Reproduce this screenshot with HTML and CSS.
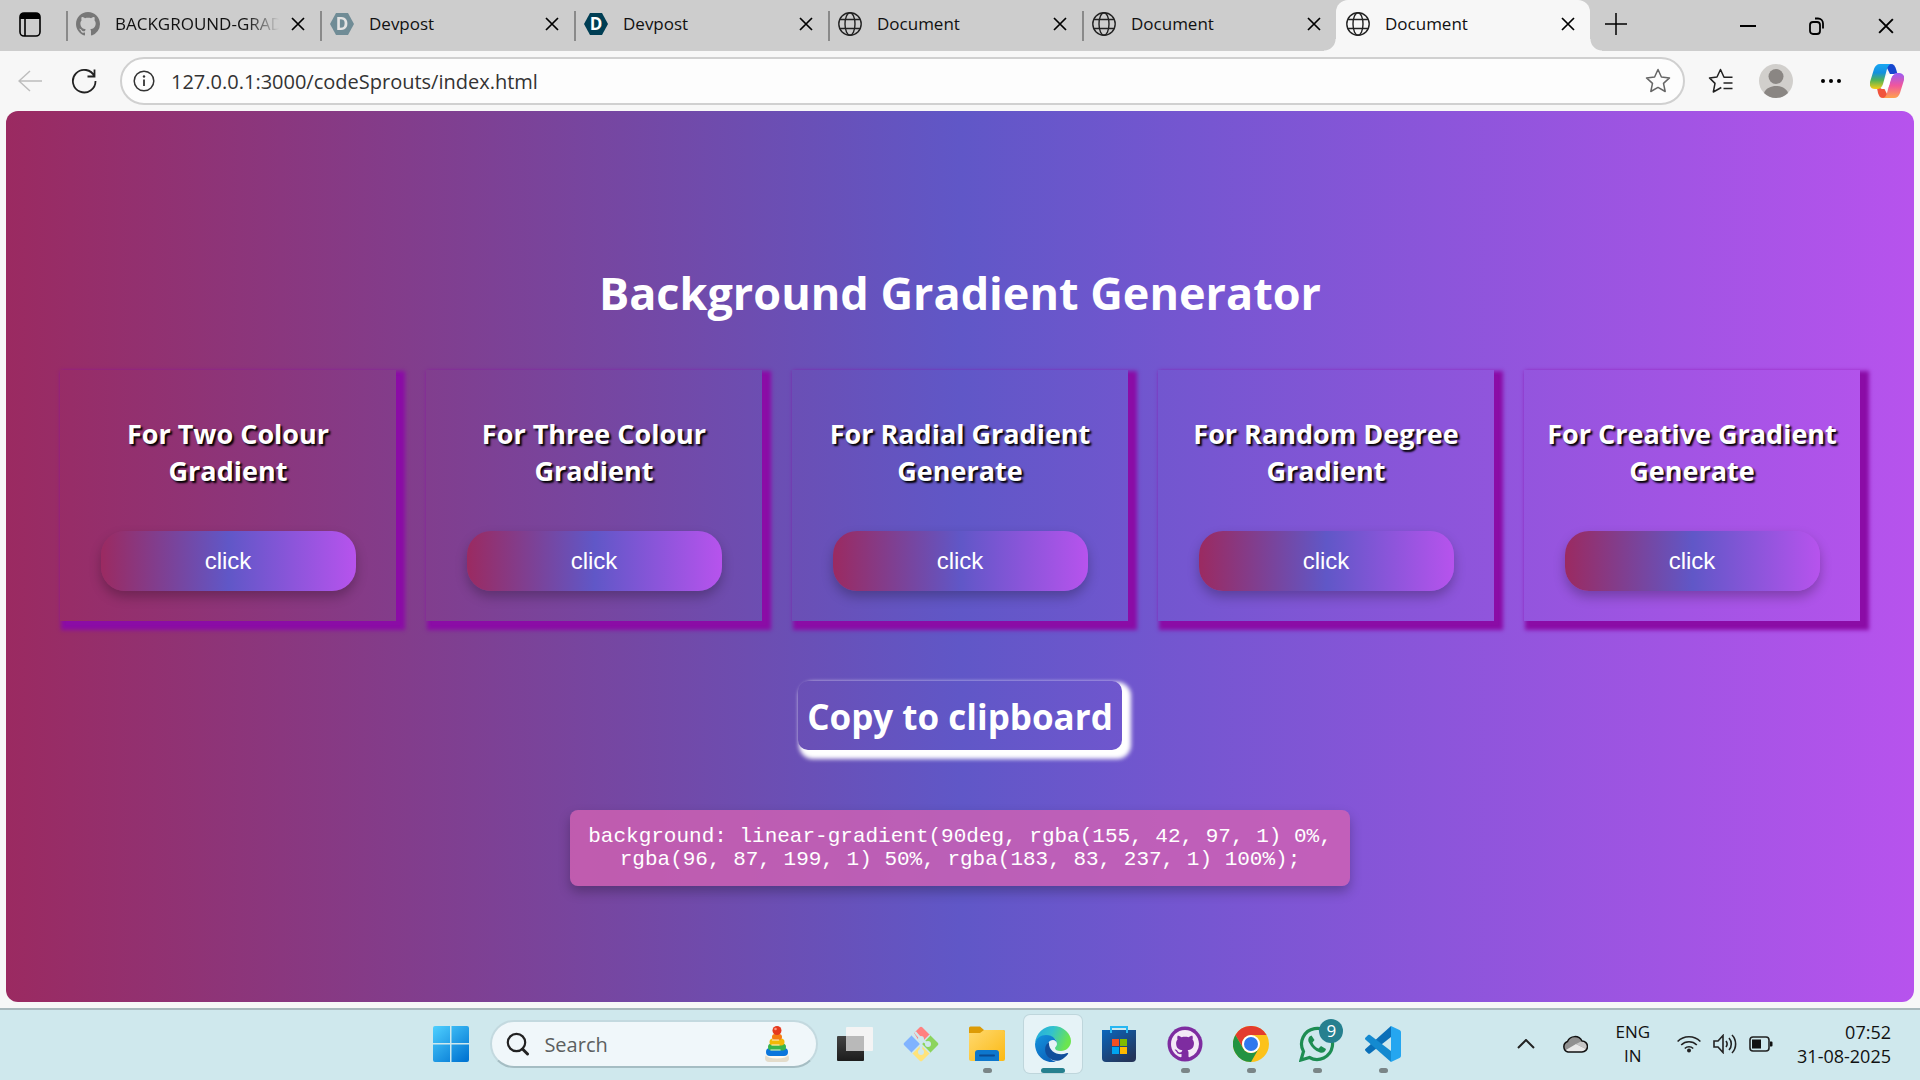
FILE: index.html
```html
<!DOCTYPE html>
<html lang="en">
<head>
  <meta charset="UTF-8" />
  <meta name="viewport" content="width=device-width, initial-scale=1.0" />
  <title>Document</title>
  <link rel="stylesheet" href="styles.css">
</head>
<body>

<svg class="sprite" aria-hidden="true">
  <symbol id="close" viewBox="0 0 14 14"><path d="M1 1l12 12M13 1L1 13" fill="none" stroke="currentColor" stroke-width="1.7"/></symbol>
  <symbol id="globe" viewBox="0 0 24 24">
    <g fill="none" stroke="#222" stroke-width="1.4"><circle cx="12" cy="12" r="11.2"/><ellipse cx="12" cy="12" rx="5" ry="11.2"/><path d="M2 7.5h20M2 16.5h20"/></g>
  </symbol>
  <symbol id="github" viewBox="0 0 16 16">
    <path fill="currentColor" d="M8 0C3.58 0 0 3.58 0 8c0 3.54 2.29 6.53 5.47 7.59.4.07.55-.17.55-.38 0-.19-.01-.82-.01-1.49-2.01.37-2.53-.49-2.69-.94-.09-.23-.48-.94-.82-1.13-.28-.15-.68-.52-.01-.53.63-.01 1.08.58 1.23.82.72 1.21 1.87.87 2.33.66.07-.52.28-.87.51-1.07-1.78-.2-3.64-.89-3.64-3.95 0-.87.31-1.59.82-2.15-.08-.2-.36-1.02.08-2.12 0 0 .67-.21 2.2.82.64-.18 1.32-.27 2-.27.68 0 1.36.09 2 .27 1.53-1.04 2.2-.82 2.2-.82.44 1.1.16 1.92.08 2.12.51.56.82 1.27.82 2.15 0 3.07-1.87 3.75-3.65 3.95.29.25.54.73.54 1.48 0 1.07-.01 1.93-.01 2.2 0 .21.15.46.55.38A8.013 8.013 0 0016 8c0-4.42-3.58-8-8-8z"/>
  </symbol>
</svg>

<header class="tab-bar">
  <button class="icon-btn workspace" aria-label="Tab actions">
    <svg width="22" height="26" viewBox="0 0 22 26"><rect x="1" y="1" width="20" height="23" rx="4" fill="none" stroke="#000" stroke-width="1.6"/><path d="M1 7V5a4 4 0 0 1 4-4h12a4 4 0 0 1 4 4v2z"/><path d="M6 7v17" stroke="#000" stroke-width="1.6"/></svg>
  </button>
  <nav class="tabs">
    <div class="tab"><a href="#"><svg class="tab-icon faded"><use href="#github"/></svg><span class="cut">BACKGROUND-GRADIENT</span></a><button class="tab-close" aria-label="Close tab"><svg><use href="#close"/></svg></button></div>
    <div class="tab"><a href="#"><svg class="tab-icon faded" viewBox="0 0 24 24"><path d="M6 1h12l6 11-6 11H6L0 12z" fill="#003e54"/><text class="devpost-d" x="12" y="18">D</text></svg><span>Devpost</span></a><button class="tab-close" aria-label="Close tab"><svg><use href="#close"/></svg></button></div>
    <div class="tab"><a href="#"><svg class="tab-icon" viewBox="0 0 24 24"><path d="M6 1h12l6 11-6 11H6L0 12z" fill="#003e54"/><text class="devpost-d" x="12" y="18">D</text></svg><span>Devpost</span></a><button class="tab-close" aria-label="Close tab"><svg><use href="#close"/></svg></button></div>
    <div class="tab"><a href="#"><svg class="tab-icon"><use href="#globe"/></svg><span>Document</span></a><button class="tab-close" aria-label="Close tab"><svg><use href="#close"/></svg></button></div>
    <div class="tab"><a href="#"><svg class="tab-icon"><use href="#globe"/></svg><span>Document</span></a><button class="tab-close" aria-label="Close tab"><svg><use href="#close"/></svg></button></div>
    <div class="tab active"><a href="#"><svg class="tab-icon"><use href="#globe"/></svg><span>Document</span></a><button class="tab-close" aria-label="Close tab"><svg><use href="#close"/></svg></button></div>
  </nav>
  <button class="icon-btn new-tab" aria-label="New tab">
    <svg width="22" height="24" viewBox="0 0 22 24"><path d="M11 1v22M0 12h22" stroke="#000" stroke-width="1.5"/></svg>
  </button>
  <div class="window-controls">
    <button class="icon-btn" aria-label="Minimize"><svg width="16" height="16" viewBox="0 0 16 16"><path d="M0 8h16" stroke="#000" stroke-width="2"/></svg></button>
    <button class="icon-btn" aria-label="Restore"><svg width="16" height="18" viewBox="0 0 16 18"><g fill="none" stroke="#000" stroke-width="1.8"><rect x="1" y="5" width="10" height="12" rx="3"/><path d="M6 1.500h3a5 5 0 0 1 5 5v5"/></g></svg></button>
    <button class="icon-btn" aria-label="Close"><svg width="16" height="16"><use href="#close"/></svg></button>
  </div>
</header>

<div class="toolbar">
  <button class="icon-btn" aria-label="Back"><svg width="24" height="22" viewBox="0 0 24 22"><path d="M24 11H1M12 1L1 11l11 10" fill="none" stroke="#bdbdbd" stroke-width="1.5"/></svg></button>
  <button class="icon-btn" aria-label="Refresh"><svg width="26" height="26" viewBox="0 0 26 26"><path d="M23.500 8.500A11.300 11.300 0 1 0 24.500 13M23.500 1.500v7h-7" fill="none" stroke="#222" stroke-width="1.8"/></svg></button>
  <div class="address">
    <svg width="22" height="22" viewBox="0 0 22 22"><circle cx="11" cy="11" r="9.800" fill="none" stroke="#333" stroke-width="1.500"/><path d="M11 9.500V16" stroke="#333" stroke-width="1.800"/><circle cx="11" cy="6.500" r="1.200" fill="#333"/></svg>
    <input type="text" aria-label="Address" value="127.0.0.1:3000/codeSprouts/index.html">
    <button class="icon-btn" aria-label="Favourite"><svg width="26" height="26" viewBox="0 0 26 26"><path d="M13 1.500l3.400 7.500 8.100.9-6 5.500 1.700 8.100L13 19.400l-7.200 4.100 1.700-8.100-6-5.500 8.100-.9z" fill="none" stroke="#666" stroke-width="1.500" stroke-linejoin="round"/></svg></button>
  </div>
  <div class="tools">
    <button class="icon-btn" aria-label="Favourites"><svg width="26" height="26" viewBox="0 0 26 26"><path d="M24.500 9.300H16L12.500 1.500 9 9l-7.500.9 5.500 5.500-1.700 8.600 8-4.500M15.500 15h9M15.500 20.500h9" fill="none" stroke="#222" stroke-width="1.500" stroke-linejoin="round"/></svg></button>
    <button class="icon-btn" aria-label="Profile"><svg width="34" height="34" viewBox="0 0 34 34"><circle cx="17" cy="17" r="17" fill="#d1cfcc"/><circle cx="17" cy="12.500" r="7.500" fill="#8a8683"/><path d="M5 29c2-5 7-7 12-7s10 2 12 7a17 17 0 0 1-24 0z" fill="#8a8683"/></svg></button>
    <button class="icon-btn" aria-label="Settings"><svg width="22" height="6" viewBox="0 0 22 6"><circle cx="3" cy="3" r="2"/><circle cx="11" cy="3" r="2"/><circle cx="19" cy="3" r="2"/></svg></button>
    <button class="icon-btn" aria-label="Copilot">
      <svg width="34" height="34" viewBox="0 0 34 34">
        <defs>
          <linearGradient id="cpA" x1="0" y1="0" x2="0" y2="1"><stop offset="0" stop-color="#18a7f2"/><stop offset=".35" stop-color="#1490df"/><stop offset=".65" stop-color="#52b356"/><stop offset="1" stop-color="#f7cc14"/></linearGradient>
          <linearGradient id="cpB" x1="0" y1="0" x2="0" y2="1"><stop offset="0" stop-color="#9a5cf5"/><stop offset=".5" stop-color="#f0569e"/><stop offset="1" stop-color="#ffa24d"/></linearGradient>
        </defs>
        <path d="M15 0h6c3 0 4 2 5 5l1.500 5H20z" fill="#1647cf"/>
        <path d="M19 34h-6c-3 0-4-2-5-5l-1-5h7z" fill="#f1543c"/>
        <path d="M10 0h12c-3 0-4 2-5 5l-4 15c-1 3-3 5-6 5H5c-4 0-6-3-5-7L4 5c1-3 3-5 6-5z" fill="url(#cpA)"/>
        <path d="M24 34H12c3 0 4-2 5-5l4-15c1-3 3-5 6-5h2c4 0 6 3 5 7l-4 13c-1 3-3 5-6 5z" fill="url(#cpB)"/>
        <path d="M21 10h5c-3 0-4 2-5 5l-2 7c-1 2-3 3-5 3H9c3 0 3.500-2 4.500-5l2-6c1-3 2.500-4 5.500-4z" fill="#fff"/>
      </svg>
    </button>
  </div>
</div>

<main class="page">
  <h1>Background Gradient Generator</h1>
  <div class="cards">
    <section class="card"><h2>For Two Colour Gradient</h2><button class="click-btn">click</button></section>
    <section class="card"><h2>For Three Colour Gradient</h2><button class="click-btn">click</button></section>
    <section class="card"><h2>For Radial Gradient Generate</h2><button class="click-btn">click</button></section>
    <section class="card"><h2>For Random Degree Gradient</h2><button class="click-btn">click</button></section>
    <section class="card"><h2>For Creative Gradient Generate</h2><button class="click-btn">click</button></section>
  </div>
  <button class="copy-btn">Copy to clipboard</button>
  <code class="output">background: linear-gradient(90deg, rgba(155, 42, 97, 1) 0%, rgba(96, 87, 199, 1) 50%, rgba(183, 83, 237, 1) 100%);</code>
</main>

<footer class="taskbar">
  <button class="app" aria-label="Start">
    <svg width="36" height="36" viewBox="0 0 36 36">
      <defs><linearGradient id="win" gradientUnits="userSpaceOnUse" x1="0" y1="0" x2="30" y2="36"><stop offset="0" stop-color="#4fd0ff"/><stop offset="1" stop-color="#0276d3"/></linearGradient></defs>
      <path d="M2 0h15v17H0V2a2 2 0 0 1 2-2zM18.500 0H34a2 2 0 0 1 2 2v15H18.500zM0 18.500h17V36H2a2 2 0 0 1-2-2zM18.500 18.500H36V34a2 2 0 0 1-2 2H18.500z" fill="url(#win)"/>
    </svg>
  </button>
  <label class="search">
    <svg width="24" height="24" viewBox="0 0 24 24"><circle cx="10.500" cy="10.500" r="8.700" fill="none" stroke="#222" stroke-width="2.200"/><path d="M16.500 17l5 5" stroke="#222" stroke-width="3" stroke-linecap="round"/></svg>
    <input type="text" placeholder="Search" aria-label="Search">
    <svg width="26" height="36" viewBox="0 0 26 36">
      <rect x="1" y="28" width="24" height="8" rx="4" fill="#e3dccb"/><ellipse cx="13" cy="29" rx="11" ry="3.500" fill="#fffaf0"/>
      <rect x="2" y="22" width="22" height="8" rx="4" fill="#0b76dc"/><rect x="4" y="17.500" width="18" height="7" rx="3.500" fill="#38b54a"/><rect x="5.500" y="12.500" width="15" height="7" rx="3.500" fill="#f2b807"/><rect x="8" y="8" width="10" height="6" rx="3" fill="#f57c12"/><circle cx="13" cy="4.500" r="4.500" fill="#e5391d"/>
      <path d="M7 24h9M8 19h7M8.500 14h6" stroke="#fff" stroke-opacity=".55" stroke-width="1.500" stroke-linecap="round"/><circle cx="11.500" cy="3" r="1.300" fill="#ff947c"/>
    </svg>
  </label>
  <nav class="apps">
    <button class="app" aria-label="Task view">
      <svg width="36" height="36" viewBox="0 0 36 36"><defs><linearGradient id="tv" x1="0" y1="0" x2="0" y2="1"><stop offset="0" stop-color="#444"/><stop offset="1" stop-color="#1c1c1c"/></linearGradient></defs><rect x="0" y="10" width="27" height="25" rx="1" fill="url(#tv)"/><rect x="9" y="1" width="27" height="24" rx="1" fill="#f4f4f4"/><path d="M9 10h18v15H10a1 1 0 0 1-1-1z" fill="#b9b9b9"/></svg>
    </button>
    <button class="app" aria-label="Git">
      <svg width="36" height="36" viewBox="0 0 36 36"><path d="M11 7l5.500-5.500a2 2 0 0 1 3 0L27 9l-9 9z" fill="#ff8080"/><path d="M27 9l7.500 7.500a2 2 0 0 1 0 3L27 27l-9-9z" fill="#8cd45c"/><path d="M27 27l-7.500 7.500a2 2 0 0 1-3 0L9 27l9-9z" fill="#ffe37a"/><path d="M9 9l9 9-9 9-7.500-7.500a2 2 0 0 1 0-3z" fill="#80b3ff"/><path d="M9 9l18 18M27 9L9 27" stroke="#cfe8ed" stroke-width="1.500"/><path d="M12 6l6 7v14M18 13l8 6" fill="none" stroke="#cfe8ed" stroke-width="2.500"/><circle cx="18" cy="13" r="3" fill="#cfe8ed"/><circle cx="18" cy="26" r="3" fill="#cfe8ed"/><circle cx="25" cy="18" r="3" fill="#cfe8ed"/></svg>
    </button>
    <button class="app running" aria-label="File Explorer">
      <svg width="36" height="36" viewBox="0 0 36 36"><defs><linearGradient id="fo" x1="0" y1="0" x2="1" y2="1"><stop offset="0" stop-color="#ffd970"/><stop offset="1" stop-color="#fbb913"/></linearGradient></defs><path d="M0 2a1.500 1.500 0 0 1 1.500-1.500H11l4 3.500h19a2 2 0 0 1 2 2v4H0z" fill="#dd9b06"/><path d="M0 7h11l4-3h19a2 2 0 0 1 2 2v27a2 2 0 0 1-2 2H2a2 2 0 0 1-2-2z" fill="url(#fo)"/><path d="M6 35V27a3 3 0 0 1 3-3h18a3 3 0 0 1 3 3v8z" fill="#0d77cd"/><path d="M11 29.500h14" stroke="#0a4b92" stroke-width="2" stroke-linecap="round"/></svg>
    </button>
    <button class="app running current" aria-label="Microsoft Edge">
      <svg width="36" height="36" viewBox="0 0 36 36">
        <defs>
          <linearGradient id="edA" x1="0" y1="0" x2="1" y2=".3"><stop offset="0" stop-color="#22a9e0"/><stop offset=".5" stop-color="#33c2cd"/><stop offset="1" stop-color="#6be54f"/></linearGradient>
          <linearGradient id="edB" x1="0" y1="0" x2=".6" y2="1"><stop offset="0" stop-color="#1493dd"/><stop offset="1" stop-color="#0b63bb"/></linearGradient>
        </defs>
        <path d="M0 17C1 7 9 0 18 0c11 0 18 8 18 15 0 6-5 10-10 10-4 0-6-1-6-3 0-1 2-2 2-4 0-5-5-8-10-8-6 0-10 3-12 7z" fill="url(#edA)"/>
        <path d="M0 18c1-6 6-9 11-9 7 0 11 5 11 9 0-2-2-4-4-4-4 0-7 5-7 9 0 6 4 11 10 13C8 38 0 28 0 18z" fill="url(#edB)"/>
        <path d="M14 16c-5 3-5 11-1 15 5 5 13 6 20-3 .5-.8 0-1.300-1-1-9 4-19-2-18-11z" fill="#104e9c"/>
      </svg>
    </button>
    <button class="app" aria-label="Microsoft Store">
      <svg width="36" height="36" viewBox="0 0 36 36"><defs><linearGradient id="st" x1="0" y1="0" x2=".7" y2="1"><stop offset="0" stop-color="#0a66bd"/><stop offset="1" stop-color="#24355a"/></linearGradient></defs><path d="M1 4h34v28a4 4 0 0 1-4 4H5a4 4 0 0 1-4-4z" fill="url(#st)"/><path d="M10 7V1h16v6" fill="none" stroke="#27b7f2" stroke-width="2"/><path d="M11 13h7v7h-7z" fill="#f25022"/><path d="M19 13h7v7h-7z" fill="#7fba00"/><path d="M11 21h7v7h-7z" fill="#00a4ef"/><path d="M19 21h7v7h-7z" fill="#ffb900"/></svg>
    </button>
    <button class="app running" aria-label="GitHub Desktop">
      <svg width="36" height="36" viewBox="0 0 36 36" color="#f3e9f6"><circle cx="18" cy="18" r="17.500" fill="#7e2ca0"/><use href="#github" x="4" y="4" width="28" height="28"/></svg>
    </button>
    <button class="app running" aria-label="Google Chrome">
      <svg width="36" height="36" viewBox="0 0 36 36"><circle cx="18" cy="18" r="18" fill="#fcc21b"/><path d="M2.400 9A18 18 0 0 1 33.600 9H18a9 9 0 0 0-8 13z" fill="#e33b2e"/><path d="M2.400 9l7.800 13.500a9 9 0 0 0 15.600 0L18 36A18 18 0 0 1 2.400 9z" fill="#229342"/><circle cx="18" cy="18" r="9" fill="#fff"/><circle cx="18" cy="18" r="7" fill="#2f78ee"/></svg>
    </button>
    <button class="app running" aria-label="WhatsApp, 9 new">
      <svg width="36" height="36" viewBox="0 0 36 36"><path d="M2 34l2.500-8.500A15.500 15.500 0 1 1 10.500 31.500z" fill="none" stroke="#1d8d52" stroke-width="3.200"/><path d="M12.500 9.500c-3 1-4 4-2.500 7 2.500 5 6 8.500 11 10 3 1 5.500-1 6-3.500l-5-3-2.500 2.500c-3-1.300-4.800-3.200-6-6l2-2.500z" fill="#1d8d52"/></svg>
      <span class="badge">9</span>
    </button>
    <button class="app running" aria-label="Visual Studio Code">
      <svg width="36" height="36" viewBox="0 0 36 36"><path d="M26 0v11L5 27.500c-.7.500-1.300.4-1.800 0L.6 25c-.8-.8-.8-1.500 0-2.300z" fill="#0a6fb8"/><path d="M26 36V25L5 9c-.7-.5-1.300-.4-1.800 0L.6 11.500c-.8.800-.8 1.500 0 2.300z" fill="#148ad0"/><path d="M26 0l8.500 4c1 .5 1.500 1.300 1.500 2.500v23c0 1.200-.5 2-1.500 2.500L26 36z" fill="#25a6f0"/></svg>
    </button>
  </nav>
  <div class="tray">
    <button class="icon-btn" aria-label="Hidden icons"><svg width="18" height="10" viewBox="0 0 18 10"><path d="M1 9l8-8 8 8" fill="none" stroke="#222" stroke-width="2"/></svg></button>
    <button class="icon-btn cloud" aria-label="OneDrive"><svg width="26" height="18" viewBox="0 0 26 18"><path d="M6 17a5.500 5.500 0 0 1-.5-10.500 8 8 0 0 1 14.500-.5A5.500 5.500 0 0 1 20 17z" fill="#909090"/><path d="M3 15.500L14 9l10 5c-1 2-2.500 3-4 3H6z" fill="#e8e8e8"/><path d="M14 9l6-3c5 0 6 6 4 8z" fill="#c6c6c6"/><path d="M6 17a5.500 5.500 0 0 1-.5-10.500 8 8 0 0 1 14.500-.5A5.500 5.500 0 0 1 20 17z" fill="none" stroke="#111" stroke-width="1.500"/></svg></button>
    <div class="lang">ENG<br>IN</div>
    <div class="status">
      <svg width="24" height="18" viewBox="0 0 24 18"><g fill="none" stroke="#222" stroke-width="1.600"><path d="M.6 6.500a16 16 0 0 1 22.800 0M4.200 10a11 11 0 0 1 15.600 0M7.800 13.500a6 6 0 0 1 8.400 0"/></g><circle cx="12" cy="15.500" r="2" fill="#222"/></svg>
      <svg width="24" height="20" viewBox="0 0 24 20"><g fill="none" stroke="#222" stroke-width="1.600"><path d="M1 7h4l5-5.500v17L5 13H1z"/><path d="M13 7a5 5 0 0 1 0 6M16 4a9 9 0 0 1 0 12M19 1a13 13 0 0 1 0 18"/></g></svg>
      <svg width="24" height="16" viewBox="0 0 24 16"><rect x="1" y="1" width="19" height="14" rx="3" fill="none" stroke="#222" stroke-width="1.600"/><path d="M3 3.500h9v9H3zM21 5.500h1.500q1 0 1 1v3q0 1-1 1H21z" fill="#111"/></svg>
    </div>
    <div class="clock"><time>07:52</time><br><time>31-08-2025</time></div>
  </div>
</footer>

</body>
</html>
```

FILE: styles.css
```css
* {
  box-sizing: border-box;
}

body {
  margin: 0;
  min-height: 100vh;
  display: flex;
  flex-direction: column;
  background-color: #f7f7f7;
  font-family: "Open Sans", "Noto Sans", sans-serif;
  color: #111;
}

button {
  font-family: inherit;
  border: none;
  background: none;
  padding: 0;
  cursor: pointer;
}

svg {
  display: block;
  flex-shrink: 0;
}

.sprite {
  position: absolute;
  width: 0;
  height: 0;
}

.icon-btn {
  display: flex;
  align-items: center;
  justify-content: center;
  flex-shrink: 0;
}

/* tab strip */
.tab-bar {
  display: flex;
  height: 51px;
  background-color: #cdcdcd;
}

.workspace {
  width: 60px;
  padding-bottom: 2px;
}

.tabs {
  display: flex;
  flex: 0 1 1524px;
  min-width: 0;
  margin-left: 6px;
}

.tab {
  position: relative;
  display: flex;
  align-items: center;
  flex: 1;
  min-width: 0;
  padding: 0 15px 3px 10px;
}

.tab:not(.active)::before {
  content: "";
  position: absolute;
  left: 0;
  top: 11px;
  width: 2px;
  height: 30px;
  background-color: #8a8a8a;
}

.tab a {
  display: flex;
  align-items: center;
  flex: 1;
  min-width: 0;
  gap: 15px;
  font-size: 17px;
  line-height: 24px;
  color: #111;
  text-decoration: none;
}

.tab-icon {
  width: 24px;
  height: 24px;
}

.tab-icon.faded {
  opacity: 0.45;
}

.devpost-d {
  font-size: 17px;
  font-weight: bold;
  text-anchor: middle;
  fill: white;
}

.cut {
  overflow: hidden;
  white-space: nowrap;
  margin-right: 12px;
  mask-image: linear-gradient(to right, #000 80%, transparent);
}

.tab-close svg {
  width: 14px;
  height: 14px;
}

.tab.active {
  background-color: #f7f7f7;
  border-radius: 12px 12px 0 0;
}

.tab.active::before,
.tab.active::after {
  content: "";
  position: absolute;
  bottom: 0;
  width: 12px;
  height: 12px;
}

.tab.active::before {
  right: 100%;
  background: radial-gradient(circle at 0 0, transparent 11px, #f7f7f7 12px);
}

.tab.active::after {
  left: 100%;
  background: radial-gradient(circle at 100% 0, transparent 11px, #f7f7f7 12px);
}

.new-tab {
  width: 52px;
  padding-bottom: 4px;
}

.window-controls {
  display: flex;
  margin-left: auto;
}

.window-controls .icon-btn {
  width: 69px;
}

/* toolbar */
.toolbar {
  display: flex;
  align-items: center;
  height: 60px;
  padding: 0 16px 0 18px;
}

.toolbar > .icon-btn {
  width: 24px;
  margin-right: 30px;
}

.toolbar .address {
  flex: 1;
  display: flex;
  align-items: center;
  gap: 16px;
  height: 48px;
  margin-left: -6px;
  padding: 0 12px 0 11px;
  background-color: #fdfdfd;
  border: 2px solid #d0d0d0;
  border-radius: 24px;
}

.address input {
  flex: 1;
  min-width: 0;
  padding: 0;
  border: none;
  outline: none;
  background: none;
  font-family: inherit;
  font-size: 20px;
  color: #333;
}

.tools {
  display: flex;
  align-items: center;
  gap: 25px;
  margin-left: 23px;
}

.tools .icon-btn:nth-child(3) {
  margin: 0 3px 0 2px;
}

/* generator page */
.page {
  flex: 1;
  display: flex;
  flex-direction: column;
  align-items: center;
  justify-content: center;
  margin: 0 6px 6px;
  padding: 34px 54px 0;
  border-radius: 12px;
  background: linear-gradient(90deg, rgba(155, 42, 97, 1) 0%, rgba(96, 87, 199, 1) 50%, rgba(183, 83, 237, 1) 100%);
  color: white;
}

h1 {
  margin: 0 0 45px;
  font-size: 45px;
  line-height: 64px;
  text-align: center;
}

.cards {
  display: grid;
  grid-template-columns: repeat(5, 1fr);
  gap: 30px;
  width: 100%;
}

.card {
  display: flex;
  flex-direction: column;
  align-items: center;
  padding: 45px 20px 30px;
  box-shadow: 5px 5px 4px 4px #8b0ca6;
  text-align: center;
}

.card h2 {
  margin: 0 0 42px;
  font-size: 27px;
  line-height: 37px;
  text-shadow: 2px 2px 2px #000;
}

.click-btn {
  width: 255px;
  max-width: 100%;
  height: 60px;
  border-radius: 24px;
  background: linear-gradient(90deg, rgba(155, 42, 97, 1) 0%, rgba(96, 87, 199, 1) 50%, rgba(183, 83, 237, 1) 100%);
  box-shadow: 0 6px 12px rgba(0, 0, 0, 0.25);
  color: white;
  font-family: "Liberation Sans", Arial, sans-serif;
  font-size: 24px;
}

.copy-btn {
  height: 69px;
  margin: 60px 0;
  padding: 2px 9px 0;
  border-radius: 10px;
  box-shadow: 5px 5px 4px 4px #fff;
  color: white;
  font-size: 35px;
  font-weight: bold;
}

.output {
  width: 780px;
  max-width: 100%;
  padding: 15px;
  border-radius: 8px;
  background-color: rgba(210, 98, 179, 0.8);
  box-shadow: 0 6px 12px rgba(0, 0, 0, 0.25);
  font-family: "Liberation Mono", "Courier New", monospace;
  font-size: 21px;
  line-height: 23px;
  text-align: center;
}

/* taskbar */
.taskbar {
  display: flex;
  align-items: center;
  height: 72px;
  padding-left: 22%;
  padding-bottom: 2px;
  border-top: 2px solid #a8b8bc;
  background-color: #cfe8ed;
}

.app {
  position: relative;
  display: flex;
  align-items: center;
  justify-content: center;
  width: 58px;
  height: 58px;
  border-radius: 6px;
}

.search {
  display: flex;
  align-items: center;
  gap: 14px;
  width: 328px;
  height: 48px;
  margin-left: 10px;
  padding: 0 26px 0 14px;
  border: 2px solid #c3d9df;
  border-bottom-color: #a5bdc3;
  border-radius: 24px;
  background-color: #f0f7fa;
}

.search input {
  flex: 1;
  min-width: 0;
  padding: 0;
  border: none;
  outline: none;
  background: none;
  font-family: inherit;
  font-size: 20px;
}

.search input::placeholder {
  color: #5c5f60;
}

.apps {
  display: flex;
  gap: 8px;
  margin-left: 8px;
}

.running::after {
  content: "";
  position: absolute;
  bottom: 0;
  width: 9px;
  height: 5px;
  border-radius: 3px;
  background-color: #7a8587;
}

.current {
  background-color: #e6f3f7;
  box-shadow: 0 0 0 1px #bfd6dc;
}

.current::after {
  width: 24px;
  background-color: #26808f;
}

.badge {
  position: absolute;
  top: 4px;
  right: 3px;
  width: 24px;
  height: 24px;
  border-radius: 50%;
  background-color: #26808f;
  color: white;
  font-size: 17px;
  line-height: 24px;
}

.tray {
  display: flex;
  align-items: center;
  margin-left: auto;
  padding-right: 29px;
  font-size: 17px;
  line-height: 24px;
}

.cloud {
  margin: 0 27px;
}

.lang {
  text-align: center;
}

.status {
  display: flex;
  align-items: center;
  gap: 12px;
  margin: 0 24px 0 27px;
}

.clock {
  font-size: 18px;
  text-align: right;
}
```
